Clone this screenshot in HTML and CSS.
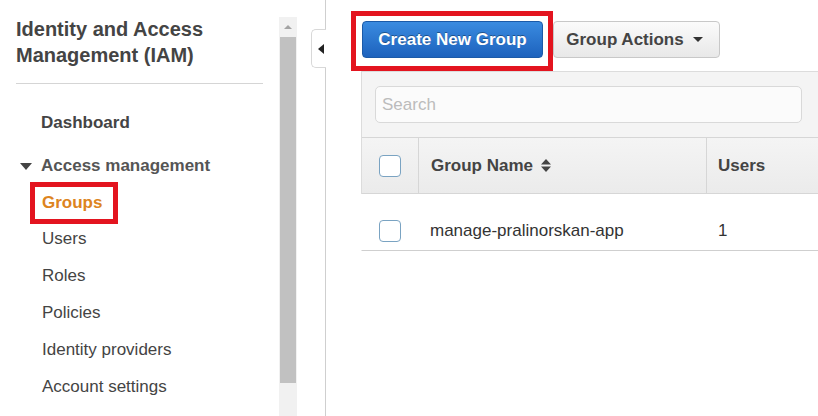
FILE: index.html
```html
<!DOCTYPE html>
<html>
<head>
<meta charset="utf-8">
<link rel="stylesheet" href="styles.css">
</head>
<body>
<div class="page">
  <aside class="sidebar">
    <div class="nav">
      <h1 class="title">Identity and Access Management (IAM)</h1>
      <hr class="rule">
      <div class="nav-dash">Dashboard</div>
      <div class="nav-section"><span class="caret"></span>Access management</div>
      <div class="nav-item active"><span class="hl">Groups</span></div>
      <div class="nav-item">Users</div>
      <div class="nav-item">Roles</div>
      <div class="nav-item">Policies</div>
      <div class="nav-item">Identity providers</div>
      <div class="nav-item">Account settings</div>
    </div>
    <div class="scrollbar">
      <div class="sb-up"><span class="sb-arrow"></span></div>
      <div class="sb-thumb"></div>
      <div class="sb-track"></div>
    </div>
  </aside>
  <div class="divider">
    <div class="collapse-tab"><span class="tab-arrow"></span></div>
  </div>
  <main class="main">
    <div class="toolbar">
      <div class="hl-box"><button class="btn-primary">Create New Group</button></div>
      <button class="btn-default">Group Actions <span class="dd-caret"></span></button>
    </div>
    <div class="panel">
      <div class="search-wrap">
        <div class="search">Search</div>
      </div>
      <div class="thead">
        <div class="cell c-check"><span class="checkbox"></span></div>
        <div class="cell c-name">Group Name <svg class="sort" width="10" height="13" viewBox="0 0 10 13"><path d="M5 0 L10 5.5 L0 5.5 Z M0 7.5 L10 7.5 L5 13 Z" fill="#444"/></svg></div>
        <div class="cell c-users">Users</div>
      </div>
      <div class="trow">
        <div class="cell c-check"><span class="checkbox"></span></div>
        <div class="cell c-name">manage-pralinorskan-app</div>
        <div class="cell c-users">1</div>
      </div>
    </div>
  </main>
</div>
</body>
</html>
```

FILE: styles.css
```css
* { box-sizing: border-box; }
html, body { margin: 0; padding: 0; background: #fff; }
body {
  font-family: "Liberation Sans", Arial, sans-serif;
  color: #444;
  width: 818px;
  height: 416px;
  overflow: hidden;
}
.page { display: flex; height: 416px; }

.sidebar { display: flex; width: 297px; flex: none; }
.nav { width: 279px; padding: 16px 16px 0 16px; }
.title {
  margin: 0;
  font-size: 20px;
  line-height: 26px;
  font-weight: bold;
  color: #444;
  width: 220px;
}
.rule { border: 0; border-top: 1px solid #d5d5d5; margin: 15px 0 0 0; }
.nav-dash {
  font-weight: bold; font-size: 17px; color: #444;
  margin: 29px 0 0 25px; line-height: 20px;
}
.nav-section {
  display: flex; align-items: center;
  font-weight: bold; font-size: 17px; color: #555;
  margin-top: 23px; line-height: 20px;
}
.caret {
  width: 0; height: 0;
  border-left: 6px solid transparent; border-right: 6px solid transparent;
  border-top: 7px solid #444;
  margin: 0 9px 0 4px;
}
.nav-item {
  font-size: 17px; line-height: 20px; color: #444;
  margin-left: 26px; margin-top: 17px;
}
.nav-item.active { margin-left: 14px; margin-top: 6px; }
.hl {
  display: inline-block;
  border: 5px solid #e3141f;
  padding: 6px 11px 6px 7px;
  color: #dd8420; font-weight: bold;
  line-height: 20px;
}
.nav-item.active + .nav-item { margin-top: 5px; }

.scrollbar { width: 18px; display: flex; flex-direction: column; margin-top: 17px; background: #f1f1f1; }
.sb-up { height: 20px; display: flex; justify-content: center; align-items: center; background: #f1f1f1; }
.sb-arrow { width: 0; height: 0; border-left: 4px solid transparent; border-right: 4px solid transparent; border-bottom: 4px solid #a3a3a3; }
.sb-thumb { height: 346px; background: #c1c1c1; margin: 0 1px; }
.sb-track { flex: 1; background: #f1f1f1; }

.divider {
  width: 29px; flex: none;
  border-right: 1px solid #cfcfcf;
  display: flex; justify-content: flex-end; align-items: flex-start;
}
.collapse-tab {
  margin-top: 29px;
  width: 15px; height: 39px;
  border: 1px solid #d8d8d8; border-right: 0;
  border-radius: 5px 0 0 5px;
  background: #fff;
  display: flex; align-items: center; justify-content: center;
  margin-right: -1px;
}
.tab-arrow { width: 0; height: 0; border-top: 5px solid transparent; border-bottom: 5px solid transparent; border-right: 6px solid #222; margin-left: 3px; }

.main { flex: 1; padding: 11px 0 0 25px; overflow: hidden; }
.toolbar { display: flex; align-items: flex-start; }
.hl-box {
  border: 5px solid #e3141f;
  padding: 5px 5px 8px 6px;
  background: #fff;
}
.btn-primary {
  display: block;
  width: 181px; height: 37px;
  border: 1px solid #1b5aa8;
  border-radius: 4px;
  background: linear-gradient(#3a8be0, #1d62bd);
  color: #fff;
  font-family: "Liberation Sans", Arial, sans-serif;
  font-weight: bold; font-size: 17px;
  text-shadow: 0 -1px 0 rgba(0,0,0,0.35);
  padding: 0;
}
.btn-default {
  margin-top: 10px;
  width: 167px; height: 37px;
  border: 1px solid #c8c8c8;
  border-radius: 4px;
  background: linear-gradient(#fbfbfb, #e8e8e8);
  color: #444;
  font-family: "Liberation Sans", Arial, sans-serif;
  font-weight: bold; font-size: 17px;
  padding: 0 4px 0 0;
  display: flex; align-items: center; justify-content: center;
}
.dd-caret { width: 0; height: 0; border-left: 5px solid transparent; border-right: 5px solid transparent; border-top: 5px solid #333; margin-left: 9px; }

.panel {
  margin-left: 10px;
  width: 470px;
  border-left: 1px solid #dcdcdc;
  border-top: 1px solid #dcdcdc;
}
.search-wrap { background: #f4f4f4; padding: 14px 16px 14px 13px; }
.search {
  width: 427px; height: 37px;
  border: 1px solid #d9d9d9;
  border-radius: 5px;
  background: #fbfbfb;
  color: #bcbcbc;
  font-size: 17px;
  line-height: 35px;
  padding-left: 6px;
}
.thead {
  display: flex; height: 57px;
  border-top: 1px solid #d6d6d6;
  border-bottom: 1px solid #d6d6d6;
  background: linear-gradient(#f4f4f4, #ebebeb);
  font-weight: bold; font-size: 17px; color: #444;
}
.trow {
  display: flex; height: 57px;
  border-bottom: 1px solid #cfcfcf;
  background: #fff;
  font-size: 17px; color: #333;
  margin-left: -1px;
  padding: 17px 0 0 1px;
  border-left: 1px solid #fff;
}
.cell { display: flex; align-items: center; }
.c-check { width: 57px; justify-content: flex-start; padding-left: 17px; }
.trow .c-check { padding-left: 16px; }
.thead .c-check { border-right: 1px solid #d6d6d6; }
.c-name { width: 288px; padding-left: 12px; }
.thead .c-name { border-right: 1px solid #d6d6d6; }
.trow .c-name { padding-left: 10px; }
.c-users { padding-left: 11px; flex: 1; }
.trow .c-users { padding-left: 10px; }
.sort { margin-left: 8px; }
.checkbox {
  display: block; width: 22px; height: 22px;
  border: 1px solid #7aa3c2; border-radius: 4px;
  background: #fff;
}
```
